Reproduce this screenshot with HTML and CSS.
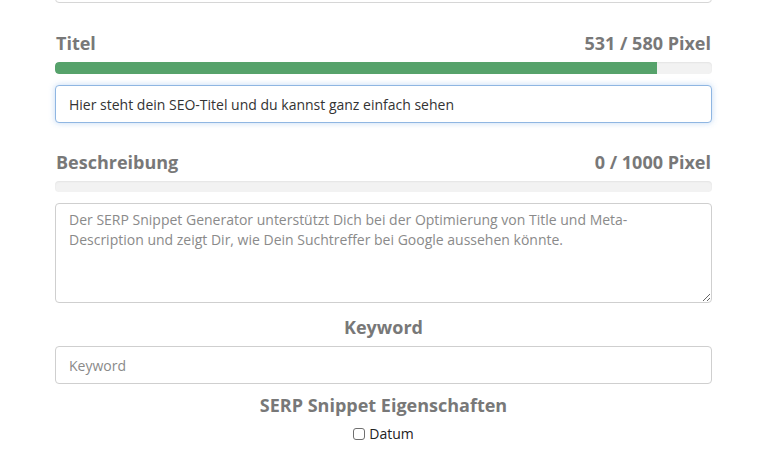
FILE: index.html
```html
<!DOCTYPE html>
<html lang="de">
<head>
<meta charset="utf-8">
<title>SERP Snippet Generator</title>
<link rel="stylesheet" href="styles.css">
</head>
<body>
<div class="page">
  <div class="cut-input"></div>

  <div class="label-row first">
    <span>Titel</span>
    <span>531 / 580 Pixel</span>
  </div>
  <div class="progress title-bar"><div class="progress-fill" style="width:91.6%"></div></div>
  <input class="field focused" type="text" value="Hier steht dein SEO-Titel und du kannst ganz einfach sehen">

  <div class="label-row second">
    <span>Beschreibung</span>
    <span>0 / 1000 Pixel</span>
  </div>
  <div class="progress desc-bar"></div>
  <textarea class="area" placeholder="Der SERP Snippet Generator unterstützt Dich bei der Optimierung von Title und Meta-Description und zeigt Dir, wie Dein Suchtreffer bei Google aussehen könnte."></textarea>

  <div class="center-label keyword-label">Keyword</div>
  <input class="field keyword" type="text" placeholder="Keyword">

  <div class="center-label props-label">SERP Snippet Eigenschaften</div>
  <label class="check"><input type="checkbox"> Datum</label>
</div>
</body>
</html>
```

FILE: styles.css
```css
html, body {
  margin: 0;
  padding: 0;
  background: #fff;
}
body {
  font-family: "Open Sans", "Liberation Sans", sans-serif;
  color: #333;
}
.page {
  padding: 0 67px 0 55px;
  display: flex;
  flex-direction: column;
}
.cut-input {
  height: 38px;
  margin-top: -35px;
  border: 1px solid #d6d6d6;
  border-radius: 4px;
  box-sizing: border-box;
}
.label-row {
  display: flex;
  justify-content: space-between;
  font-size: 18px;
  font-weight: 700;
  line-height: 24px;
  color: #787878;
  padding: 0 1px 0 1px;
}
.label-row.first { margin-top: 28px; }
.label-row.second { margin-top: 27px; }
.progress {
  background: #f2f2f2;
  border-radius: 4px;
  box-shadow: inset 0 1px 2px rgba(0,0,0,0.06);
  overflow: hidden;
  margin-top: 7px;
}
.title-bar { height: 12px; }
.desc-bar { height: 11px; }
.progress-fill {
  height: 100%;
  background: #56a26b;
  border-radius: 4px 0 0 4px;
}
.field {
  display: block;
  box-sizing: border-box;
  width: 100%;
  height: 38px;
  margin: 11px 0 0 0;
  padding: 6px 13px;
  border: 1px solid #cfcfcf;
  border-radius: 4px;
  font-family: inherit;
  font-size: 14px;
  color: #333;
  background: #fff;
  outline: none;
}
.field.focused {
  border-color: #8fb6e2;
  box-shadow: 0 0 6px rgba(120,170,230,0.45);
}
.field::placeholder, .area::placeholder {
  color: #8a8a8a;
  opacity: 1;
}
.area {
  display: block;
  box-sizing: border-box;
  width: 100%;
  height: 100px;
  margin-top: 11px;
  padding: 6px 13px;
  border: 1px solid #cfcfcf;
  border-radius: 4px;
  font-family: inherit;
  font-size: 14px;
  line-height: 20px;
  color: #333;
  resize: vertical;
  outline: none;
}
.center-label {
  text-align: center;
  font-size: 18px;
  font-weight: 700;
  line-height: 24px;
  color: #787878;
}
.keyword-label { margin-top: 12px; }
.field.keyword { margin-top: 7px; }
.props-label { margin-top: 9px; }
.check {
  align-self: center;
  margin-top: 7px;
  display: flex;
  align-items: center;
  gap: 4px;
  font-size: 14px;
  line-height: 20px;
  color: #222;
}
.check input {
  appearance: none;
  -webkit-appearance: none;
  width: 12px;
  height: 12px;
  margin: 0;
  border: 1px solid #6f6f6f;
  border-radius: 3px;
  background: #fff;
}
```
